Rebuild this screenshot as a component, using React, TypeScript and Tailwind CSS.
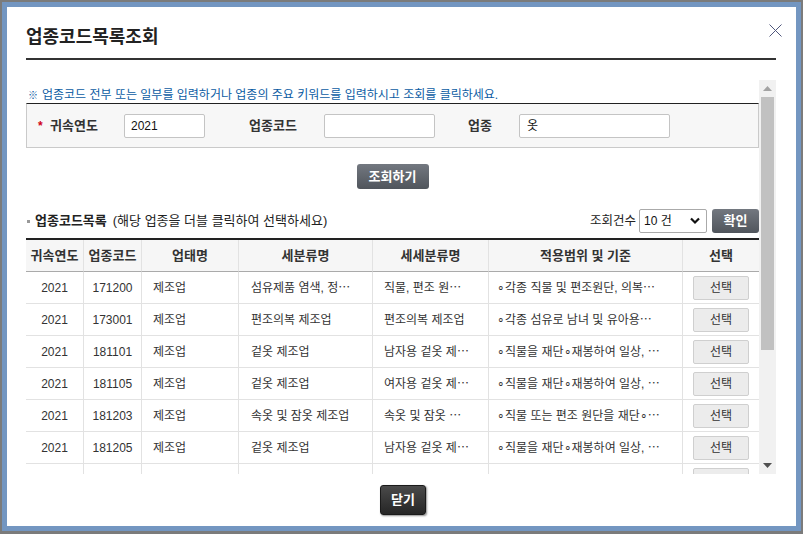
import React from "react";

const FONT = { fontFamily: '"Liberation Sans", "Noto Sans CJK KR", sans-serif' };

const ROWS = [
  ["2021", "171200", "제조업", "섬유제품 염색, 정⋯", "직물, 편조 원⋯", "∘각종 직물 및 편조원단, 의복⋯"],
  ["2021", "173001", "제조업", "편조의복 제조업", "편조의복 제조업", "∘각종 섬유로 남녀 및 유아용⋯"],
  ["2021", "181101", "제조업", "겉옷 제조업", "남자용 겉옷 제⋯", "∘직물을 재단∘재봉하여 일상, ⋯"],
  ["2021", "181105", "제조업", "겉옷 제조업", "여자용 겉옷 제⋯", "∘직물을 재단∘재봉하여 일상, ⋯"],
  ["2021", "181203", "제조업", "속옷 및 잠옷 제조업", "속옷 및 잠옷 ⋯", "∘직물 또는 편조 원단을 재단∘⋯"],
  ["2021", "181205", "제조업", "겉옷 제조업", "남자용 겉옷 제⋯", "∘직물을 재단∘재봉하여 일상, ⋯"],
];

const HEAD = ["귀속연도", "업종코드", "업태명", "세분류명", "세세분류명", "적용범위 및 기준", "선택"];
const COLS = [57, 58, 97, 134, 116, 194, 77];

function GrayButton({ children, className }: { children: React.ReactNode; className: string }) {
  return (
    <button
      className={
        "flex items-center justify-center rounded-[3px] bg-gradient-to-b from-[#737880] to-[#50555c] text-[13px] font-bold text-white " +
        className
      }
    >
      {children}
    </button>
  );
}

const cell = "border-b border-l border-[#e2e2e2]";

export default function App() {
  return (
    <div className="w-[803px] h-[534px] bg-[#7b7b7b] overflow-hidden pt-[2px] pl-[2px]" style={FONT}>
      {/* blue frame */}
      <div className="w-[799px] h-[529px] bg-[rgb(115,150,193)] p-[5px]">
        <div className="relative w-full h-full bg-white flex flex-col">
          {/* close */}
          <button className="absolute top-[17px] right-[14px] w-[13px] h-[13px]">
            <svg width="13" height="13" viewBox="0 0 13 13">
              <line x1="0.5" y1="0.5" x2="12.5" y2="12.5" stroke="#50577c" strokeWidth="1" />
              <line x1="12.5" y1="0.5" x2="0.5" y2="12.5" stroke="#50577c" strokeWidth="1" />
            </svg>
          </button>

          {/* title */}
          <div className="shrink-0 mx-[19px] w-[750px] h-[53px] pt-[18px] border-b-2 border-[#333]">
            <h2 className="text-[18px] leading-[24px] font-bold text-[#222]">업종코드목록조회</h2>
          </div>

          {/* scroll region */}
          <div className="shrink-0 mt-[20px] ml-[19px] flex h-[394px] w-[750px] overflow-hidden">
            <div className="w-[733px] h-[394px] overflow-hidden">
              <p className="pt-[8px] h-[23px] text-[12px] leading-[15px] text-[#0b5ca3] pl-[2px] whitespace-nowrap">
                <span className="text-[10px] mr-[4px]">※</span>
                업종코드 전부 또는 일부를 입력하거나 업종의 주요 키워드를 입력하시고 조회를 클릭하세요.
              </p>

              {/* search box */}
              <div className="h-[45px] border border-t-[#222] border-x-[#cacaca] border-b-[#cacaca] bg-[#f7f7f7] flex items-center pl-[11px] text-[13px] font-bold text-[#333]">
                <span className="w-[12px] text-[#d0021b] text-[12px]">*</span>
                <span className="w-[74px]">귀속연도</span>
                <div className="w-[81px] h-[24px] border border-[#c4c4c4] rounded-[2px] bg-white flex items-center pl-[6px] text-[12px] font-normal text-[#111]">
                  2021
                </div>
                <span className="ml-[44px] w-[75px]">업종코드</span>
                <div className="w-[111px] h-[24px] border border-[#c4c4c4] rounded-[2px] bg-white" />
                <span className="ml-[33px] w-[51px]">업종</span>
                <div className="w-[151px] h-[24px] border border-[#c4c4c4] rounded-[2px] bg-white flex items-center pl-[7px] text-[12px] font-normal text-[#111]">
                  옷
                </div>
              </div>

              <div className="mt-[16px] flex justify-center">
                <GrayButton className="w-[72px] h-[25px]">조회하기</GrayButton>
              </div>

              {/* list header */}
              <div className="mt-[20px] h-[24px] flex items-center">
                <span className="w-[3px] h-[3px] bg-[#999] ml-[1px] mr-[5px]" />
                <span className="text-[13px] font-bold text-[#222]">업종코드목록</span>
                <span className="ml-[6px] text-[13px] text-[#222]">(해당 업종을 더블 클릭하여 선택하세요)</span>
                <span className="ml-auto text-[12.5px] text-[#222]">조회건수</span>
                <div className="ml-[3px] w-[68px] h-[24px] border border-[#aaa] rounded-[2px] bg-white flex items-center pl-[4px] pr-[6px] text-[12px] text-[#111]">
                  <span>10 건</span>
                  <svg className="ml-auto" width="10" height="8" viewBox="0 0 10 8">
                    <path d="M1 1.5 L5 5.5 L9 1.5" fill="none" stroke="#111" strokeWidth="2.2" />
                  </svg>
                </div>
                <GrayButton className="ml-[5px] w-[47px] h-[24px]">확인</GrayButton>
              </div>

              {/* table */}
              <table className="mt-[5px] w-[733px] table-fixed border-separate border-spacing-0 border-t-2 border-[#222] text-[12px] text-[#333]">
                <colgroup>
                  {COLS.map((w, i) => (
                    <col key={i} style={{ width: w }} />
                  ))}
                </colgroup>
                <thead>
                  <tr className="bg-[#f6f6f6]">
                    {HEAD.map((h, i) => (
                      <th
                        key={h}
                        className={
                          "h-[32px] border-b border-b-[#aaa] text-[13px] font-bold text-[#333] text-center whitespace-nowrap p-0 " +
                          (i > 0 ? "border-l border-l-[#e2e2e2]" : "")
                        }
                      >
                        {h}
                      </th>
                    ))}
                  </tr>
                </thead>
                <tbody>
                  {ROWS.map((r, ri) => (
                    <tr key={ri}>
                      <td className="h-[32px] border-b border-[#e2e2e2] text-center p-0">{r[0]}</td>
                      <td className={cell + " text-center p-0"}>{r[1]}</td>
                      <td className={cell + " pl-[11px] whitespace-nowrap overflow-hidden"}>{r[2]}</td>
                      <td className={cell + " pl-[12px] whitespace-nowrap overflow-hidden"}>{r[3]}</td>
                      <td className={cell + " pl-[11px] whitespace-nowrap overflow-hidden"}>{r[4]}</td>
                      <td className={cell + " pl-[8px] whitespace-nowrap overflow-hidden"}>{r[5]}</td>
                      <td className={cell + " p-0"}>
                        <div className="flex justify-center">
                          <button className="w-[56px] h-[24px] rounded-[2px] border border-[#cfcfcf] bg-[#ececec] text-[12px] text-[#333]">
                            선택
                          </button>
                        </div>
                      </td>
                    </tr>
                  ))}
                  {/* next row, scrolled out of view */}
                  <tr>
                    <td className="h-[32px] border-b border-[#e2e2e2] p-0" />
                    <td className={cell} />
                    <td className={cell} />
                    <td className={cell} />
                    <td className={cell} />
                    <td className={cell} />
                    <td className={cell + " p-0"}>
                      <div className="flex justify-center">
                        <div className="w-[56px] h-[24px] rounded-[2px] border border-[#cfcfcf] bg-[#ececec]" />
                      </div>
                    </td>
                  </tr>
                </tbody>
              </table>
            </div>

            {/* scrollbar */}
            <div className="w-[17px] bg-[#f1f1f1] flex flex-col items-center">
              <div className="h-[17px] flex items-center justify-center">
                <svg width="9" height="5" viewBox="0 0 9 5">
                  <path d="M4.5 0 L9 5 L0 5 Z" fill="#a3a3a3" />
                </svg>
              </div>
              <div className="w-[13px] h-[253px] bg-[#c1c1c1]" />
              <div className="mt-auto h-[17px] flex items-center justify-center">
                <svg width="9" height="5" viewBox="0 0 9 5">
                  <path d="M0 0 L9 0 L4.5 5 Z" fill="#505050" />
                </svg>
              </div>
            </div>
          </div>

          {/* close button */}
          <div className="shrink-0 mt-[11px] flex justify-center pl-[3px]">
            <button className="w-[46px] h-[30px] rounded-[3px] border border-[#1a1a1a] bg-gradient-to-b from-[#4a4a4a] to-[#262626] text-[13px] font-bold text-white shadow-[1px_1px_2px_rgba(0,0,0,0.45)]">
              닫기
            </button>
          </div>
        </div>
      </div>
    </div>
  );
}
